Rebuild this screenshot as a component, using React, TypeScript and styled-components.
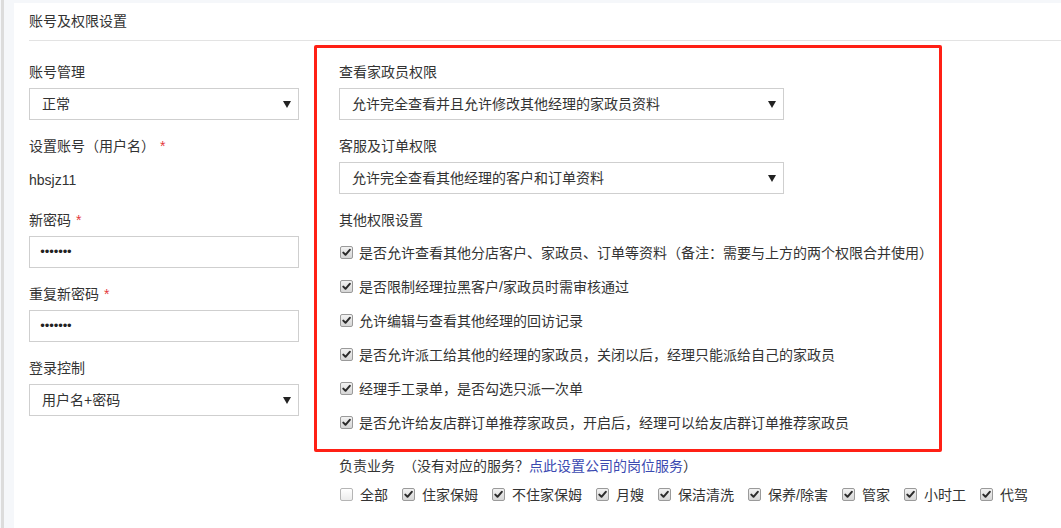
import styled, { createGlobalStyle } from "styled-components";

const GlobalStyle = createGlobalStyle`
  html, body {
    margin: 0;
    padding: 0;
    background: #f5f7fa;
  }
  body {
    font-family: "Liberation Sans", "Noto Sans CJK SC", sans-serif;
    font-size: 14px;
    color: #333;
  }
`;

const Shell = styled.div`
  display: flex;
  min-height: 100vh;
  margin-left: 1px;
  border-left: 3px solid #dcdcdc;
  padding: 3px 0 0 10px;
  box-sizing: border-box;
  background: #f5f7fa;
`;

const Card = styled.div`
  flex: 1;
  background: #fff;
  padding-left: 15px;
`;

const Header = styled.div`
  height: 37px;
  line-height: 37px;
  border-bottom: 1px solid #e3e3e3;
  font-size: 14px;
  color: #333;
`;

const Body = styled.div`
  display: flex;
  align-items: flex-start;
  padding-top: 4px;
`;

const LeftCol = styled.div`
  width: 270px;
  margin-right: 15px;
  padding-top: 17px;
`;

const RightCol = styled.div`
  display: flex;
  flex-direction: column;
`;

const Group = styled.div`
  margin-bottom: 16px;
`;

const Label = styled.div`
  height: 20px;
  line-height: 20px;
  margin-bottom: 6px;
  white-space: nowrap;
`;

const Star = styled.span`
  color: #e4393c;
  margin-left: 5px;
`;

const Select = styled.div<{ $width?: number }>`
  position: relative;
  width: ${(p) => (p.$width ? `${p.$width}px` : "100%")};
  height: 32px;
  box-sizing: border-box;
  border: 1px solid #cfcfcf;
  background: #fff;
  padding: 0 30px 0 12px;
  line-height: 30px;
  white-space: nowrap;
`;

const Arrow = styled.span`
  position: absolute;
  right: 7px;
  top: 12px;
  width: 0;
  height: 0;
  border-left: 4px solid transparent;
  border-right: 4px solid transparent;
  border-top: 7px solid #222;
`;

const Input = styled.input`
  display: block;
  width: 100%;
  height: 32px;
  box-sizing: border-box;
  border: 1px solid #cfcfcf;
  padding: 0 9px;
  font-family: "DejaVu Sans", sans-serif;
  font-size: 12px;
  color: #222;
  letter-spacing: -2.6px;
  outline: none;
`;

const Value = styled.div`
  height: 32px;
  line-height: 36px;
`;

const Box = styled.div`
  width: 628px;
  box-sizing: border-box;
  border: 3px solid #ff2015;
  border-radius: 2px;
  padding: 14px 22px 17px 22px;
`;

const List = styled.div`
  display: flex;
  flex-direction: column;
  gap: 14px;
  margin-top: 12px;
`;

const CheckRow = styled.label`
  display: flex;
  align-items: center;
  height: 20px;
  white-space: nowrap;
`;

const Tick = styled.span<{ $on: boolean; $gap: number }>`
  display: inline-flex;
  align-items: center;
  justify-content: center;
  width: 13px;
  height: 13px;
  box-sizing: border-box;
  margin: 0 ${(p) => p.$gap}px 0 1px;
  border: 1px solid ${(p) => (p.$on ? "#9a9a9a" : "#b5b5b5")};
  border-radius: 2px;
  background: ${(p) =>
    p.$on
      ? "linear-gradient(#f2f2f2, #d6d6d6)"
      : "linear-gradient(#ffffff, #ececec)"};
  flex-shrink: 0;
`;

const Bottom = styled.div`
  padding-left: 25px;
  margin-top: 4px;
`;

const Note = styled.span`
  margin-left: 8px;
`;

const Link = styled.a`
  color: #3b4ab1;
  text-decoration: none;
`;

const Services = styled.div`
  display: flex;
  align-items: center;
  margin-top: 8px;
  height: 20px;
`;

const ServiceItem = styled.label`
  display: flex;
  align-items: center;
  margin-right: 13px;
  white-space: nowrap;
`;

const Check = ({ on, gap }: { on: boolean; gap: number }) => (
  <Tick $on={on} $gap={gap}>
    {on && (
      <svg width="9" height="9" viewBox="0 0 9 9">
        <path
          d="M1.3 4.6 L3.5 6.8 L7.8 1.8"
          fill="none"
          stroke="#2b2b2b"
          strokeWidth="2"
          strokeLinecap="round"
          strokeLinejoin="round"
        />
      </svg>
    )}
  </Tick>
);

const permissions = [
  "是否允许查看其他分店客户、家政员、订单等资料（备注：需要与上方的两个权限合并使用）",
  "是否限制经理拉黑客户/家政员时需审核通过",
  "允许编辑与查看其他经理的回访记录",
  "是否允许派工给其他的经理的家政员，关闭以后，经理只能派给自己的家政员",
  "经理手工录单，是否勾选只派一次单",
  "是否允许给友店群订单推荐家政员，开启后，经理可以给友店群订单推荐家政员",
];

const services = [
  { name: "全部", on: false },
  { name: "住家保姆", on: true },
  { name: "不住家保姆", on: true },
  { name: "月嫂", on: true },
  { name: "保洁清洗", on: true },
  { name: "保养/除害", on: true },
  { name: "管家", on: true },
  { name: "小时工", on: true },
  { name: "代驾", on: true },
];

export default function App() {
  return (
    <>
      <GlobalStyle />
      <Shell>
        <Card>
          <Header>账号及权限设置</Header>
          <Body>
            <LeftCol>
              <Group>
                <Label>账号管理</Label>
                <Select>
                  正常
                  <Arrow />
                </Select>
              </Group>
              <Group>
                <Label>
                  设置账号（用户名）<Star>*</Star>
                </Label>
                <Value>hbsjz11</Value>
              </Group>
              <Group>
                <Label>
                  新密码<Star>*</Star>
                </Label>
                <Input type="password" defaultValue="1234567" readOnly />
              </Group>
              <Group>
                <Label>
                  重复新密码<Star>*</Star>
                </Label>
                <Input type="password" defaultValue="1234567" readOnly />
              </Group>
              <Group>
                <Label>登录控制</Label>
                <Select>
                  用户名+密码
                  <Arrow />
                </Select>
              </Group>
            </LeftCol>
            <RightCol>
              <Box>
                <Group>
                  <Label>查看家政员权限</Label>
                  <Select $width={445}>
                    允许完全查看并且允许修改其他经理的家政员资料
                    <Arrow />
                  </Select>
                </Group>
                <Group>
                  <Label>客服及订单权限</Label>
                  <Select $width={445}>
                    允许完全查看其他经理的客户和订单资料
                    <Arrow />
                  </Select>
                </Group>
                <Label>其他权限设置</Label>
                <List>
                  {permissions.map((text) => (
                    <CheckRow key={text}>
                      <Check on gap={6} />
                      {text}
                    </CheckRow>
                  ))}
                </List>
              </Box>
              <Bottom>
                <Label>
                  负责业务
                  <Note>
                    （没有对应的服务？<Link href="#">点此设置公司的岗位服务</Link>）
                  </Note>
                </Label>
                <Services>
                  {services.map((s) => (
                    <ServiceItem key={s.name}>
                      <Check on={s.on} gap={7} />
                      {s.name}
                    </ServiceItem>
                  ))}
                </Services>
              </Bottom>
            </RightCol>
          </Body>
        </Card>
      </Shell>
    </>
  );
}
